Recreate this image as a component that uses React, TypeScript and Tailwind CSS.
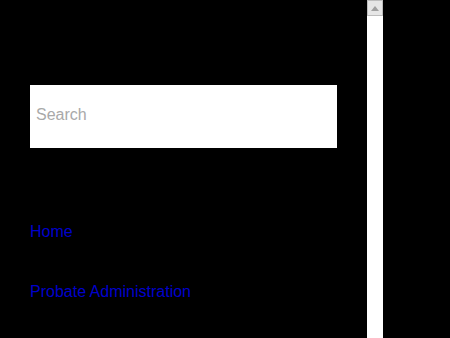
export default function App() {
  return (
    <div className="flex h-[338px] w-[450px] overflow-hidden bg-black font-['Liberation_Sans',Arial,sans-serif]">
      {/* Sidebar */}
      <div className="w-[367px] pl-[30px] pt-[85px]">
        <div className="flex h-[63px] w-[307px] items-center bg-white px-[6px] pb-[4px]">
          <input
            placeholder="Search"
            className="w-full bg-transparent text-[16px] text-black outline-none placeholder:text-[#a9a9a9]"
          />
        </div>

        <nav className="mt-[75px] flex flex-col gap-[42px] text-[16px] leading-[18px]">
          <a href="#" className="text-[#0000cc]">Home</a>
          <a href="#" className="text-[#0000cc]">Probate Administration</a>
        </nav>
      </div>

      {/* Scrollbar */}
      <div className="flex w-[16px] flex-col bg-white">
        <div className="flex h-[16px] items-center justify-center border border-[#bdbdbd] bg-[#e6e6e6]">
          <span className="h-0 w-0 border-x-[4px] border-b-[5px] border-x-transparent border-b-[#a0a0a0]" />
        </div>
      </div>
    </div>
  );
}
